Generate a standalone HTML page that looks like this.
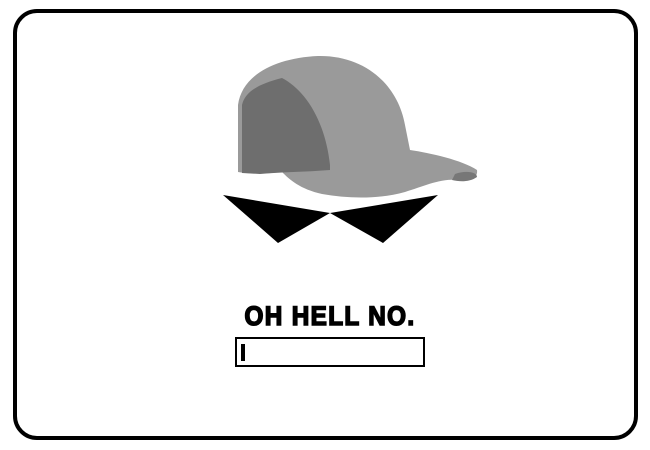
<!DOCTYPE html>
<html><head><meta charset="utf-8"><style>
html,body{margin:0;padding:0;width:650px;height:450px;background:#fff;overflow:hidden}
.frame{position:absolute;left:13px;top:9px;width:617px;height:423px;border:4.5px solid #000;border-radius:24px}
.t{position:absolute;left:180px;top:301px;width:300px;text-align:center;font-family:"Liberation Sans",sans-serif;font-weight:900;font-size:27px;letter-spacing:1.5px;color:#000;line-height:30px;-webkit-text-stroke:1.6px #000;transform:scaleX(0.9)}
.in{position:absolute;left:235px;top:337px;width:186px;height:26px;border:2px solid #000}
.cur{position:absolute;left:4px;top:5px;width:4px;height:17px;background:#000}
</style></head><body>
<div class="frame"></div>
<svg width="650" height="450" style="position:absolute;left:0;top:0">
<path d="M238,172 L238,105 C242,75 275,58 318,56 C365,55 398,85 405,125 L410,150 C430,153 462,160 477,170 C478,177 472,181 462,180 C440,178 425,186 405,192 C380,199 350,199 322,194 C300,189 290,180 282,172 C265,174 250,174 238,172 Z" fill="#9a9a9a"/>
<path d="M242,173 L242,105 C245,92 258,84 282,78 C305,90 325,120 330,165 L330,170 C305,172 280,172 260,174 Z" fill="#6e6e6e"/>
<path d="M455,174 C466,170 477,172 477,177 C470,182 460,182 452,180 Z" fill="#777"/>
<polygon points="223,195 330,213 438,195 383,243 330,213 278,243" fill="#000"/>
</svg>
<div class="t">OH HELL NO.</div>
<div class="in"><div class="cur"></div></div>
</body></html>
